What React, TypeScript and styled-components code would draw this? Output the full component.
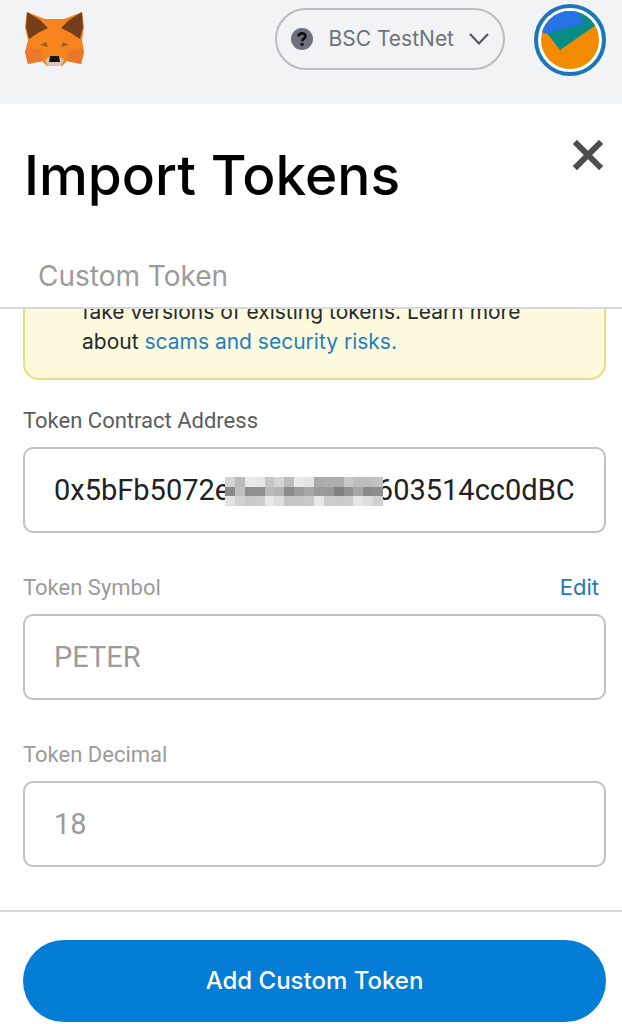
import React from "react";
import styled, { createGlobalStyle } from "styled-components";

const display = `Inter, "Open Sans", sans-serif`;
const body = `Roboto, "Noto Sans", sans-serif`;

const GlobalStyle = createGlobalStyle`
  *, *::before, *::after { box-sizing: border-box; }
  body { margin: 0; background: #fff; }
`;

const Page = styled.div`
  display: flex;
  flex-direction: column;
  height: 100vh;
  background: #fff;
  font-family: ${display};
`;

const TopBar = styled.header`
  display: flex;
  align-items: flex-start;
  flex: none;
  gap: 29px;
  height: 104px;
  padding: 4px 16px 0 24px;
  background: #f2f3f4;
`;

const LogoLink = styled.a`
  display: block;
  margin: 7px auto 0 0;
`;

const NetworkButton = styled.button`
  display: flex;
  align-items: center;
  gap: 15px;
  height: 62px;
  margin-top: 4px;
  padding: 0 14px;
  border: 2px solid #bbbdc0;
  border-radius: 31px;
  background: transparent;
  color: #6a737d;
  font: 400 21px/30px ${display};
`;

const AccountButton = styled.button`
  display: grid;
  place-items: center;
  width: 72px;
  height: 72px;
  padding: 0;
  border: 4px solid #1b76bd;
  border-radius: 50%;
  background: #fff;
`;

const Heading = styled.div`
  display: flex;
  flex: none;
  justify-content: space-between;
  align-items: flex-start;
  padding: 36px 19px 0 24px;
`;

const Title = styled.h1`
  margin: 0;
  color: #000;
  font: 500 55px/70px ${display};
`;

const CloseButton = styled.button`
  display: block;
  padding: 0;
  border: 0;
  background: none;
`;

const Tabs = styled.nav`
  display: flex;
  flex: none;
  height: 99px;
  padding: 48px 24px 0;
  border-bottom: 2px solid #d6d9dc;
`;

const Tab = styled.button`
  height: 36px;
  padding: 0 14px;
  border: 0;
  background: none;
  color: #9b9b9b;
  font: 400 28px/36px ${display};
`;

const Scroller = styled.main`
  display: flex;
  flex: 1;
  flex-direction: column-reverse;
  min-height: 0;
  overflow-y: auto;
  scrollbar-width: none;
`;

const Form = styled.form`
  display: flex;
  flex-direction: column;
  gap: 26px;
  padding: 0 16px 43px 23px;
`;

const Notice = styled.p`
  margin: 0;
  padding: 20px 56px 21px 57px;
  border: 2px solid #e9dc7c;
  border-radius: 16px;
  background: #fdfadd;
  color: #24292e;
  font: 400 21px/30px ${display};
`;

const NoticeLink = styled.a`
  color: #1f80c0;
  text-decoration: none;
`;

const Field = styled.div<{ $muted?: boolean }>`
  display: flex;
  flex-direction: column;
  gap: 12px;
  padding-bottom: 14px;
  color: ${(p) => (p.$muted ? "#9b9b9b" : "#5b5d5f")};
  &:last-child { padding-bottom: 0; }
`;

const FieldHead = styled.div`
  display: flex;
  justify-content: space-between;
  padding-right: 7px;
  font: 400 22px/29px ${body};
`;

const EditButton = styled.button`
  padding: 0;
  border: 0;
  background: none;
  color: #1f7ab8;
  font: 400 22px/29px ${display};
`;

const InputWrap = styled.div`
  position: relative;
`;

const Input = styled.input<{ $muted?: boolean }>`
  display: block;
  width: 100%;
  height: 86px;
  padding: 0 28px 0 29px;
  border: 2px solid #bfc1c3;
  border-radius: 10px;
  background: #fff;
  color: ${(p) => (p.$muted ? "#9b9b9b" : "#222")};
  font: 400 29px/36px ${body};
  outline: none;
`;

const Mosaic = styled.svg`
  position: absolute;
  top: 30px;
  left: 202px;
`;

const Footer = styled.footer`
  flex: none;
  padding: 28px 16px 2px 23px;
  border-top: 2px solid #d6d9dc;
`;

const PrimaryButton = styled.button`
  display: block;
  width: 100%;
  height: 82px;
  border: 0;
  border-radius: 41px;
  background: #037dd6;
  color: #fff;
  font: 500 24px/32px ${display};
`;

const Fox = () => (
  <svg width="62" height="58" viewBox="0 0 62 58" aria-hidden="true">
    <path d="M3 1 21 8H40L58 1 60 16 58 29 60 41 57 53 43 50 38 55H23L18 50 4 53 1 41 4 29 1 16Z" fill="#f5841f" />
    <path d="M1 41 4 37 17 39 18 50 4 53ZM60 41 57 37 44 39 43 50 57 53Z" fill="#e9782a" />
    <path d="M3 1 16 9 24 17 14 22 5 28 2 16ZM58 1 45 9 37 17 47 22 56 28 59 16Z" fill="#763e1a" />
    <path d="M16 34 22 31 24 36ZM45 34 39 31 37 36Z" fill="#a75a25" />
    <path d="M21 49 25 46H36L40 49 37 55H24Z" fill="#d7c5ba" />
    <path d="M26 45H35L36 51H25Z" fill="#161616" />
  </svg>
);

const QuestionMark = () => (
  <svg width="22" height="22" viewBox="0 0 22 22" aria-hidden="true">
    <circle cx="11" cy="11" r="11" fill="#6a737d" />
    <path d="M7.5 8.5C7.7 4.3 14.5 4.4 14.4 8.3 14.3 10.7 11.3 10.6 11.2 13.2" fill="none" stroke="#111" strokeWidth="2.8" />
    <circle cx="11.1" cy="16.4" r="1.7" fill="#111" />
  </svg>
);

const Chevron = () => (
  <svg width="20" height="12" viewBox="0 0 20 12" aria-hidden="true">
    <path d="M1 1 10 10.5 19 1" fill="none" stroke="#4d555c" strokeWidth="2" />
  </svg>
);

const Avatar = () => (
  <svg width="58" height="58" viewBox="0 0 58 58" aria-hidden="true">
    <defs>
      <clipPath id="avatar"><circle cx="29" cy="29" r="29" /></clipPath>
    </defs>
    <g clipPath="url(#avatar)">
      <path d="M0 0H58V58H0Z" fill="#f38b00" />
      <path d="M-2 20 5 21 19 39 58 12V-4H20Z" fill="#078d85" />
      <path d="M-2 0H36L43 13 14 20 6 23-2 21Z" fill="#2573e6" />
    </g>
  </svg>
);

const Cross = () => (
  <svg width="30" height="30" viewBox="0 0 30 30" aria-hidden="true">
    <path d="M4 4 26 26M26 4 4 26" stroke="#4d4d4d" strokeWidth="6" strokeLinecap="square" />
  </svg>
);

const shades = [
  ["#d4d4d4", "#bcbcbc", "#e9e9e9", "#e6e6e6", "#c6c6c6", "#d5d5d5", "#bcbcbc", "#e9e9e9", "#e3e3e3", "#aaaaaa", "#aeaeae", "#adadad", "#c9c9c9", "#bdbdbd", "#bebebe", "#c2c2c2"],
  ["#8a8a8a", "#c0c0c0", "#8f8f8f", "#8f8f8f", "#b8b8b8", "#b4b4b4", "#8b8b8b", "#9a9a9a", "#a7a7a7", "#9b9b9b", "#999999", "#808080", "#929292", "#a6a6a6", "#8a8a8a", "#8d8d8d"],
  ["#e3e3e3", "#d2d2d2", "#c9c9c9", "#cccccc", "#e8e8e8", "#dddddd", "#c5c5c5", "#c5c5c5", "#c9c9c9", "#e8e8e8", "#cccccc", "#cbcbcb", "#cccccc", "#e5e5e5", "#dddddd", "#d0d0d0"],
];

const Redaction = () => (
  <Mosaic width="158" height="29" viewBox="0 0 160 30" preserveAspectRatio="none" shapeRendering="crispEdges" aria-hidden="true">
    {shades.map((row, y) =>
      row.map((fill, x) => <rect key={`${x}-${y}`} x={x * 10} y={y * 10} width="10" height="10" fill={fill} />)
    )}
  </Mosaic>
);

export default function App() {
  return (
    <Page>
      <GlobalStyle />
      <TopBar>
        <LogoLink href="#" aria-label="MetaMask"><Fox /></LogoLink>
        <NetworkButton type="button">
          <QuestionMark />
          BSC TestNet
          <Chevron />
        </NetworkButton>
        <AccountButton type="button" aria-label="Account"><Avatar /></AccountButton>
      </TopBar>
      <Heading>
        <Title>Import Tokens</Title>
        <CloseButton type="button" aria-label="Close"><Cross /></CloseButton>
      </Heading>
      <Tabs>
        <Tab type="button">Custom Token</Tab>
      </Tabs>
      <Scroller>
        <Form id="token-form">
          <Notice>
            fake versions of existing tokens. Learn more about{" "}
            <NoticeLink href="#">scams and security risks.</NoticeLink>
          </Notice>
          <Field>
            <FieldHead><label htmlFor="address">Token Contract Address</label></FieldHead>
            <InputWrap>
              <Input id="address" defaultValue="0x5bFb5072e000000000603514cc0dBC" />
              <Redaction />
            </InputWrap>
          </Field>
          <Field $muted>
            <FieldHead>
              <label htmlFor="symbol">Token Symbol</label>
              <EditButton type="button">Edit</EditButton>
            </FieldHead>
            <Input id="symbol" $muted defaultValue="PETER" />
          </Field>
          <Field $muted>
            <FieldHead><label htmlFor="decimal">Token Decimal</label></FieldHead>
            <Input id="decimal" $muted defaultValue="18" />
          </Field>
        </Form>
      </Scroller>
      <Footer>
        <PrimaryButton type="submit" form="token-form">Add Custom Token</PrimaryButton>
      </Footer>
    </Page>
  );
}
